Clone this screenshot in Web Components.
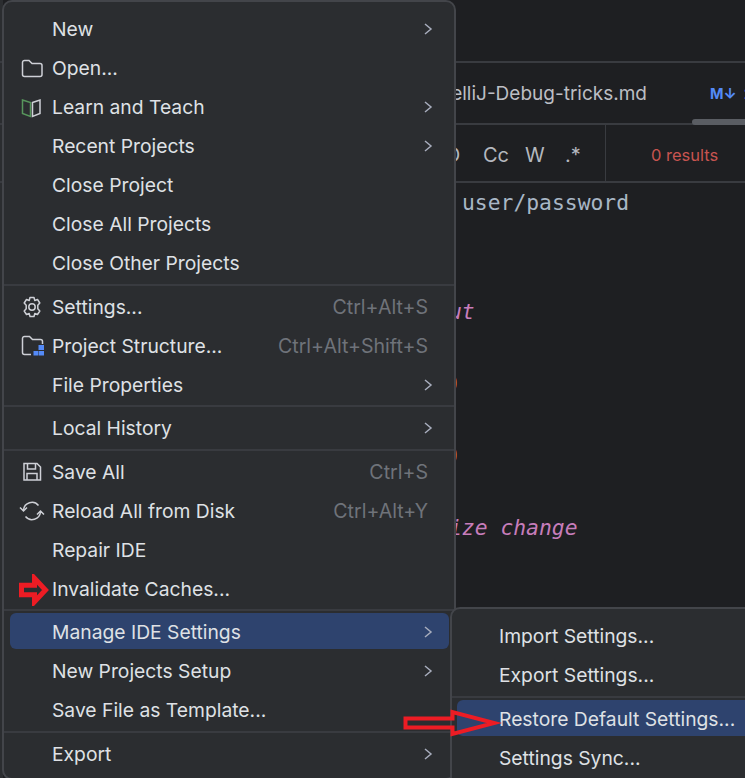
<!DOCTYPE html>
<html><head><meta charset="utf-8">
<style>
html,body{margin:0;padding:0;background:#1e1f22;overflow:hidden}
body{width:745px;height:778px;position:relative;font-family:Inter,"Liberation Sans",sans-serif}
</style></head><body>
<template id="t-item">
<style>
:host{display:flex;align-items:center;height:39px;margin:0 5px 0 6px;padding:0 21px 0 10px;border-radius:6px;color:#dfe1e5;font-size:19.3px;white-space:nowrap;box-sizing:border-box}
:host([active]){background:#2e436e;height:36px;margin-top:1px;margin-bottom:2px;padding-top:2px}
:host(.s){margin-left:5px}
.ic{width:32px;height:24px;flex:none;display:flex;align-items:center}
.lb{flex:1}
.sc{color:#6f737a;font-size:19.6px}
.ch{display:none;width:12px;height:16px;flex:none;margin-right:-5.5px}
:host([sub]) .ch{display:block}
</style>
<span class="ic"><slot name="icon"></slot></span><span class="lb"><slot></slot></span><span class="sc" id="sc"></span>
<svg class="ch" viewBox="0 0 12 16" fill="none" stroke="#a8adbd" stroke-width="1.5"><path d="M3 3l6 5-6 5"/></svg>
</template>
<template id="t-sep"><style>:host{display:block;height:5px;position:relative}:host([thin]){height:4px}
div{position:absolute;left:0;right:0;top:50%;margin-top:-1px;height:2px;background:#393b40}</style><div></div></template>
<template id="t-menu"><style>:host{display:block;position:absolute;background:#2b2d30;border:2px solid #43454a;box-sizing:border-box}</style><slot></slot></template>
<template id="t-editor"><style>
:host{display:flex;flex-direction:column;position:absolute;inset:0;background:linear-gradient(90deg,#2b2d30 0 3px,#1e1f22 3px);color:#dfe1e5}
.top{height:61px;border-bottom:2px solid #393b40;flex:none}
.tabs{height:60px;flex:none;border-bottom:2px solid #393b40;position:relative;display:flex;align-items:center;font-size:19px;color:#bcbec4;white-space:nowrap}
.tn{position:absolute;right:98px}
.md{position:absolute;left:710px;color:#548af7;font-weight:700;font-size:14.500px;white-space:nowrap}
.md i{font-style:normal;margin-left:4px}
.thumb{position:absolute;left:692px;right:0;bottom:-2px;height:6px;background:#5a5d63;border-radius:3px 0 0 3px}
.find{height:56px;flex:none;border-bottom:2px solid #393b40;display:flex;align-items:center;position:relative;color:#b4b8bf;font-size:20px}
.find span{position:absolute;white-space:nowrap;margin-top:4px}
.div{position:absolute;left:605px;top:0;bottom:0;width:1px;background:#393b40}
.find .res{left:651px;color:#c75450;font-size:16.5px}
.code{position:relative;flex:1;font:21.35px "DejaVu Sans Mono",monospace;white-space:pre}
.code span{position:absolute;line-height:26px}
.p{font-style:italic;color:#c77dbb}
.o{color:#d9822b}
</style>
<div class="top"></div>
<div class="tabs"><span class="tn">IntelliJ-Debug-tricks.md</span><span class="md">M↓ <i>2</i></span><div class="thumb"></div></div>
<div class="find"><span style="left:445px">O</span><span style="left:483px">Cc</span><span style="left:525px">W</span><span style="left:565px">.*</span><div class="div"></div><span class="res">0 results</span></div>
<div class="code"><span style="left:462px;top:7px;color:#a9b7c6">user/password</span><span class="p" style="left:449px;top:116px">ut</span><span class="o" style="left:445px;top:188px">0</span><span class="o" style="left:445px;top:260px">0</span><span class="p" style="left:449px;top:332px">ize change</span></div>
</template>
<ide-editor></ide-editor>
<ide-menu style="left:2px;top:0;width:454px;height:780px;border-radius:10px;padding-top:7px">
<ide-item sub>New</ide-item>
<ide-item><svg slot="icon" width="24" height="24" viewBox="0 0 24 24" fill="none" stroke="#ced0d6" stroke-width="1.5"><path d="M2.500 6.500a2 2 0 0 1 2-2h4.500l3 3h8a2 2 0 0 1 2 2v9a2 2 0 0 1-2 2h-15.500a2 2 0 0 1-2-2z"/></svg>Open...</ide-item>
<ide-item sub><svg slot="icon" width="24" height="24" viewBox="0 0 24 24" fill="none" stroke-width="1.5"><path stroke="#57965c" d="M2.500 5l8 2.500v14l-8-3z"/><path stroke="#ced0d6" d="M12.500 7.500l7.500-2.500v13.500l-7.500 3z"/></svg>Learn and Teach</ide-item>
<ide-item sub>Recent Projects</ide-item>
<ide-item>Close Project</ide-item>
<ide-item>Close All Projects</ide-item>
<ide-item>Close Other Projects</ide-item>
<ide-sep></ide-sep>
<ide-item shortcut="Ctrl+Alt+S"><svg slot="icon" width="24" height="24" viewBox="0 0 24 24" fill="none" stroke="#ced0d6" stroke-width="1.500"><circle cx="12" cy="12" r="3.200"/><path d="M10 2.500h4l.8 3 2.700-1 2.300 3.500-2 2.300v3.400l2 2.300-2.300 3.500-2.700-1-.8 3h-4l-.8-3-2.700 1-2.300-3.500 2-2.300v-3.400l-2-2.300 2.300-3.500 2.700 1z" stroke-linejoin="round"/></svg>Settings...</ide-item>
<ide-item shortcut="Ctrl+Alt+Shift+S"><svg slot="icon" width="26" height="24" viewBox="0 0 26 24" fill="none" style="flex:none"><path stroke="#ced0d6" stroke-width="1.500" d="M11 20.500h-6.500a2 2 0 0 1-2-2v-14a2 2 0 0 1 2-2h5l3 3h8a2 2 0 0 1 2 2v2.500"/><path fill="#548af7" d="M18.500 11h5.500v5h-5.500zM13.500 17h5v4.500h-5zM19 17h5v4.500h-5z"/></svg>Project Structure...</ide-item>
<ide-item sub>File Properties</ide-item>
<ide-sep thin></ide-sep>
<ide-item sub>Local History</ide-item>
<ide-sep></ide-sep>
<ide-item shortcut="Ctrl+S"><svg slot="icon" width="24" height="24" viewBox="0 0 24 24" fill="none" stroke="#ced0d6" stroke-width="1.500"><path d="M4 3.500h13l3.500 3.500v13h-16.500z"/><path d="M7.500 3.500v5.500h8v-5.500M7 20v-6.500h10v6.500"/></svg>Save All</ide-item>
<ide-item shortcut="Ctrl+Alt+Y"><svg slot="icon" width="26" height="24" viewBox="0 0 26 24" fill="none" stroke="#ced0d6" stroke-width="1.500" style="margin-left:-1px;flex:none"><path d="M4.500 11a8.500 8.500 0 0 1 15-4.500M21.500 13a8.500 8.500 0 0 1-15 4.500"/><path d="M1 8.500l3.500 3.500 3.500-3.500M18 15.500l3.500-3.500 3.500 3.500"/></svg>Reload All from Disk</ide-item>
<ide-item>Repair IDE</ide-item>
<ide-item>Invalidate Caches...</ide-item>
<ide-sep thin></ide-sep>
<ide-item sub active>Manage IDE Settings</ide-item>
<ide-item sub>New Projects Setup</ide-item>
<ide-item>Save File as Template...</ide-item>
<ide-sep></ide-sep>
<ide-item sub>Export</ide-item>
</ide-menu>
<ide-menu style="left:450px;top:607px;width:310px;height:180px;border-radius:10px;padding-top:7px">
<ide-item class="s">Import Settings...</ide-item>
<ide-item class="s">Export Settings...</ide-item>
<ide-sep></ide-sep>
<ide-item class="s" active>Restore Default Settings...</ide-item>
<ide-item class="s">Settings Sync...</ide-item>
</ide-menu>
<svg style="position:absolute;left:18px;top:574px" width="32" height="32" viewBox="0 0 32 32"><path d="M3.500 11.200h13v-7l11 11.800-11 11.800v-7h-13z" fill="none" stroke="#ed1c24" stroke-width="5"/></svg>
<svg style="position:absolute;left:402px;top:708px" width="100" height="32" viewBox="0 0 100 32"><path d="M3.500 10.500h47v-6.500l42 11-42 11v-6.500h-47z" fill="none" stroke="#ed1c24" stroke-width="4"/></svg>
<script>
function def(n,t,extra){customElements.define(n,class extends HTMLElement{connectedCallback(){if(this.shadowRoot)return;const r=this.attachShadow({mode:'open'});r.appendChild(document.getElementById(t).content.cloneNode(true));if(extra)extra(this,r);}});}
def('ide-item','t-item',(h,r)=>{r.getElementById('sc').textContent=h.getAttribute('shortcut')||'';});
def('ide-sep','t-sep');def('ide-menu','t-menu');def('ide-editor','t-editor');
</script>
</body></html>
